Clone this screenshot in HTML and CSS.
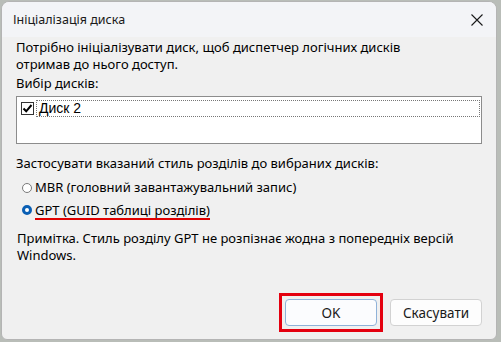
FILE: index.html
```html
<!DOCTYPE html>
<html lang="uk">
<head>
    <meta charset="UTF-8">
    <meta name="viewport" content="width=device-width, initial-scale=1.0">
    <title>Ініціалізація диска</title>
    <link rel="stylesheet" href="styles.css">
</head>
<body>
    <div class="window">
        <div class="titlebar">
            <span class="title">Ініціалізація диска</span>
            <span class="close">
                <svg width="12" height="12" viewBox="0 0 12 12">
                    <path d="M0.5 0.5 L11.5 11.5 M11.5 0.5 L0.5 11.5" stroke="#1a1a1a" stroke-width="1.1" fill="none"/>
                </svg>
            </span>
        </div>

        <div class="content">
            <p class="intro">Потрібно ініціалізувати диск, щоб диспетчер логічних дисків<br>отримав до нього доступ.</p>

            <div class="label">Вибір дисків:</div>
            <div class="listbox">
                <div class="item">
                    <span class="check">
                        <svg width="11" height="11" viewBox="0 0 11 11">
                            <path d="M1.5 5.5 L4.2 8.3 L9.5 2" stroke="#000" stroke-width="2" fill="none"/>
                        </svg>
                    </span>
                    <span class="item-text">Диск 2</span>
                </div>
            </div>

            <div class="label style-label">Застосувати вказаний стиль розділів до вибраних дисків:</div>
            <div class="radio-row first">
                <span class="radio"></span>
                <span>MBR (головний завантажувальний запис)</span>
            </div>
            <div class="radio-row">
                <span class="radio selected"></span>
                <span class="marked">GPT (GUID таблиці розділів)</span>
            </div>

            <p class="note">Примітка. Стиль розділу GPT не розпізнає жодна з попередніх версій<br>Windows.</p>
        </div>

        <div class="buttons">
            <div class="highlight">
                <button class="btn default">OK</button>
            </div>
            <button class="btn">Скасувати</button>
        </div>
    </div>
</body>
</html>
```

FILE: styles.css
```css
body {
    margin: 0;
    background-color: #b9bdb8;
    font-family: "Noto Sans", "Liberation Sans", sans-serif;
    font-size: 13px;
    color: #000;
}
.window {
    width: 496px;
    height: 339px;
    margin: 1px 0 0 1px;
    background-color: #f0f0f0;
    border: 1px solid #b4b4b4;
    border-radius: 8px 8px 6px 6px;
    box-sizing: border-box;
    display: flex;
    flex-direction: column;
    overflow: hidden;
}
.titlebar {
    height: 35px;
    background-color: #f3f4f7;
    display: flex;
    align-items: center;
    justify-content: space-between;
    padding: 0 13px 0 11px;
    flex-shrink: 0;
}
.title {
    font-size: 12.5px;
    color: #1a1a1a;
}
.close {
    display: flex;
    padding-top: 1px;
}
.content {
    padding: 2px 15px 0 14px;
}
p {
    margin: 0;
    line-height: 17px;
}
.label {
    line-height: 17px;
    margin-top: 2px;
}
.listbox {
    margin-top: 4px;
    height: 48px;
    width: 466px;
    background-color: #fff;
    border: 1px solid #8c8c8c;
    box-sizing: border-box;
    padding: 3px 1px 0 4px;
}
.item {
    display: flex;
    align-items: center;
    gap: 2px;
}
.check {
    width: 13px;
    height: 13px;
    border: 1px solid #333;
    box-sizing: border-box;
    display: flex;
    align-items: center;
    justify-content: center;
    background-color: #fff;
}
.item-text {
    flex: 1;
    height: 17px;
    line-height: 15px;
    font-family: "Liberation Sans", sans-serif;
    font-size: 14px;
    border: 1px dotted #777;
    box-sizing: border-box;
    padding-left: 2px;
}
.style-label {
    margin-top: 11px;
}
.radio-row {
    display: flex;
    align-items: center;
    gap: 3px;
    line-height: 17px;
    margin-top: 6px;
    padding-left: 6px;
}
.radio-row.first {
    margin-top: 7px;
}
.radio {
    width: 10px;
    height: 10px;
    border: 1px solid #7a7a7a;
    border-radius: 50%;
    box-sizing: border-box;
    background-color: #fff;
}
.radio.selected {
    border: 3px solid #0a5fb4;
    background-color: #fff;
}
.marked {
    border-bottom: 2px solid #e00000;
    line-height: 16px;
    margin-bottom: -2px;
}
.note {
    margin-top: 12px;
    padding-left: 1px;
}
.buttons {
    margin-top: auto;
    display: flex;
    justify-content: flex-end;
    align-items: center;
    gap: 13px;
    padding: 0 14px 13px 0;
}
.highlight {
    outline: 3px solid #e4000f;
    outline-offset: 3px;
    display: flex;
}
.btn {
    width: 92px;
    height: 27px;
    font-family: "Noto Sans", "Liberation Sans", sans-serif;
    font-size: 13.5px;
    color: #1a1a1a;
    background-color: #fdfdfd;
    border: 1px solid #d2d2d2;
    border-radius: 4px;
    padding: 0;
}
.btn.default {
    border-color: #8fb2d9;
    background-color: #fbfcfe;
}
```
